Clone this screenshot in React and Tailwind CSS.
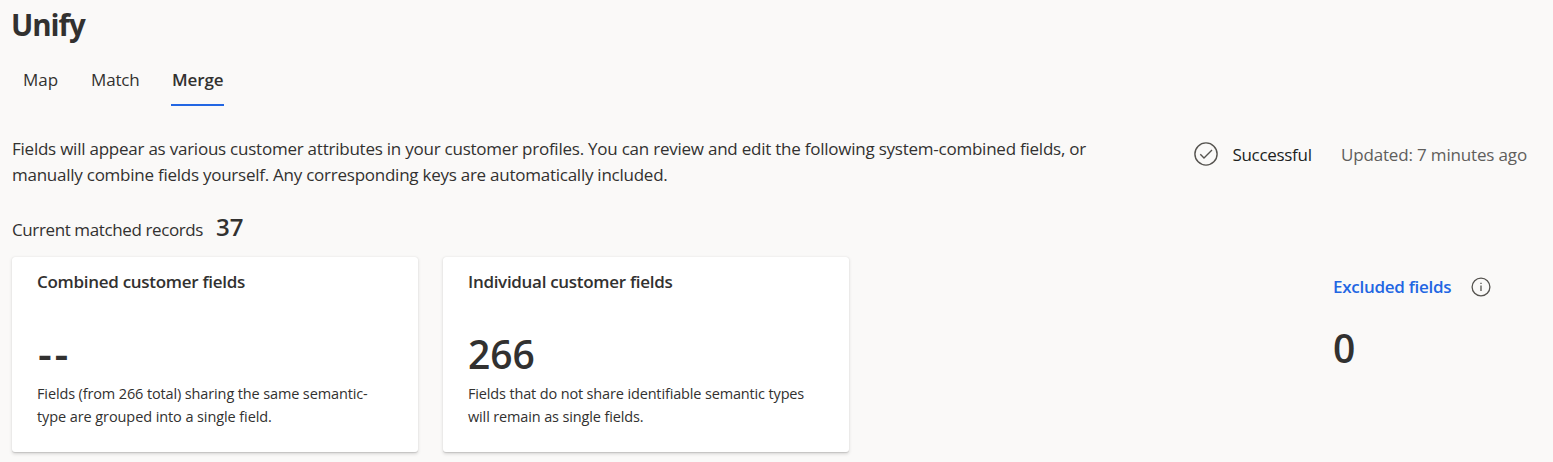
const tabs = [
  { label: 'Map', style: 'ml-[11px] w-[68px] tracking-[-0.05px]' },
  { label: 'Match', style: 'w-[80px] tracking-[-0.15px]' },
];

function Card({ title, titleStyle, value, valueStyle, lines }) {
  return (
    <section className="h-[195px] w-[406px] rounded-[3px] bg-white px-[25px] pt-[13px] shadow-[0_1.6px_3.6px_rgba(0,0,0,0.14),0_0.3px_0.9px_rgba(0,0,0,0.11)]">
      <h2 className={`text-[17px] leading-6 font-semibold ${titleStyle}`}>{title}</h2>
      <div className={`mt-9 leading-[48px] font-semibold ${valueStyle}`}>{value}</div>
      <p className="mt-1 text-[14.5px] leading-[23px]">
        {lines.map((line) => (
          <span key={line.text} className={`block ${line.style}`}>{line.text}</span>
        ))}
      </p>
    </section>
  );
}

export default function App() {
  return (
    <main className="h-[462px] overflow-hidden bg-[#faf9f8] px-3 pt-[5px] font-['Open_Sans',sans-serif] text-[17px] whitespace-nowrap text-[#323130]">
      <h1 className="-ml-px text-[29.5px] leading-10 font-bold tracking-[-1.05px]">Unify</h1>

      <nav className="mt-[23px] flex h-[38px] leading-6">
        {tabs.map((tab) => (
          <a key={tab.label} className={tab.style}>{tab.label}</a>
        ))}
        <a className="w-[53px] border-b-2 border-[#2266e3] pl-px font-semibold tracking-[-0.1px]">Merge</a>
      </nav>

      <div className="mt-[30px] flex justify-between">
        <p className="leading-[26px]">
          <span className="block tracking-[-0.236px]">
            Fields will appear as various customer attributes in your customer profiles. You can review and edit the following system-combined fields, or
          </span>
          <span className="block tracking-[-0.25px]">
            manually combine fields yourself. Any corresponding keys are automatically included.
          </span>
        </p>
        <div className="mt-1.5 mr-[14px] flex h-[26px] items-center leading-[26px]">
          <svg className="-mt-[3px] mr-[14px] size-6" viewBox="0 0 24 24" fill="none" stroke="#55534f" strokeWidth="1.4">
            <circle cx="12" cy="12" r="11.1" />
            <path d="M6.3 12.2 10 15.9 18 7.9" />
          </svg>
          <span className="w-[108.5px] tracking-[-0.3px] text-[#201f1e]">Successful</span>
          <span className="tracking-[-0.16px] text-[#605e5c]">Updated: 7 minutes ago</span>
        </div>
      </div>

      <div className="mt-[27px] flex h-[30px] items-baseline leading-6">
        <span className="w-[204px] tracking-[-0.39px]">Current matched records</span>
        <span className="text-2xl leading-6 font-semibold">37</span>
      </div>

      <div className="mt-3 flex">
        <Card
          title="Combined customer fields"
          titleStyle="tracking-[-0.29px]"
          value="--"
          valueStyle="pl-px text-[43px] tracking-[2.6px]"
          lines={[
            { text: 'Fields (from 266 total) sharing the same semantic-', style: 'tracking-[-0.13px]' },
            { text: 'type are grouped into a single field.', style: 'tracking-[-0.09px]' },
          ]}
        />
        <div className="w-[25px]" />
        <Card
          title="Individual customer fields"
          titleStyle="tracking-[-0.3px]"
          value="266"
          valueStyle="text-[39px]"
          lines={[
            { text: 'Fields that do not share identifiable semantic types', style: 'tracking-[-0.15px]' },
            { text: 'will remain as single fields.', style: 'tracking-[-0.14px]' },
          ]}
        />
        <section className="ml-[484px] pt-[18px]">
          <div className="flex items-center leading-6">
            <a className="w-[137.5px] font-semibold tracking-[-0.28px] text-[#2266e3]">Excluded fields</a>
            <svg className="-mt-px size-5" viewBox="0 0 20 20" fill="none" stroke="#55534f" strokeWidth="1.3">
              <circle cx="10" cy="10" r="8.9" />
              <path d="M10 8.5V14M10 5.7V7.1" />
            </svg>
          </div>
          <div className="mt-[25px] text-[39px] leading-[48px] font-semibold">0</div>
        </section>
      </div>
    </main>
  );
}
